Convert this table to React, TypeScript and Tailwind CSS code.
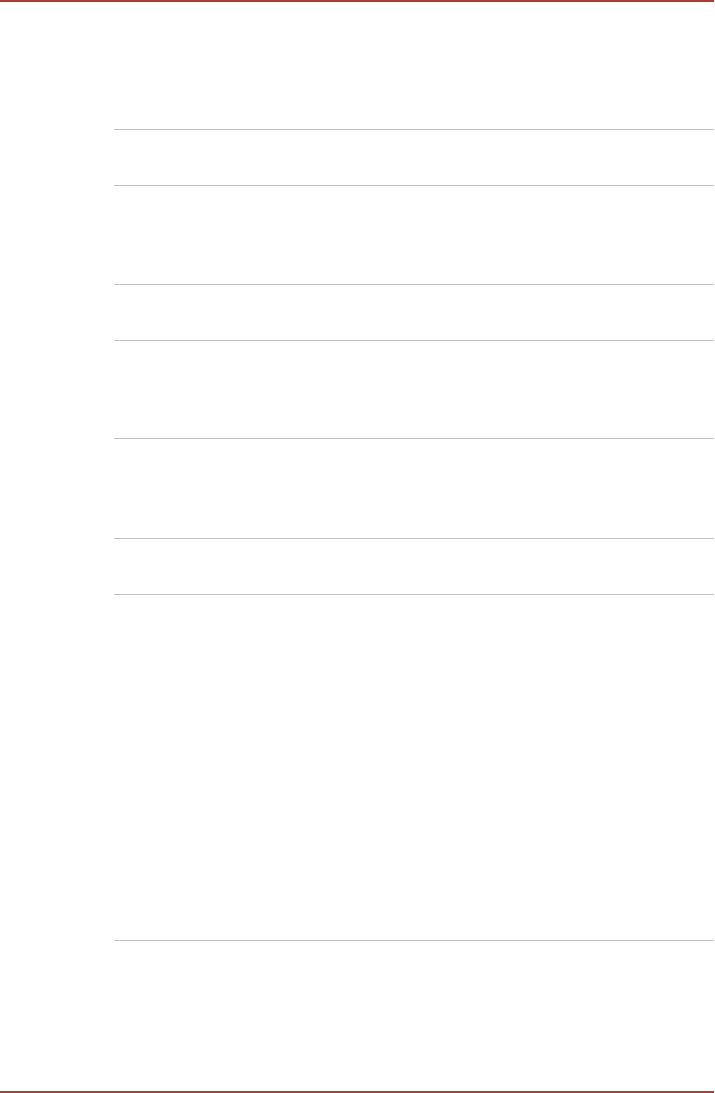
const rows = [
  "h-[56px]",
  "h-[99px]",
  "h-[56px]",
  "h-[98px]",
  "h-[100px]",
  "h-[56px]",
  "h-[346px]",
];

export default function App() {
  return (
    <div className="flex h-[1093px] w-[715px] flex-col bg-white">
      <div className="mr-[1px] h-[2px] bg-[#a83d3b]" />
      <div className="flex flex-1 flex-col pl-[114px] pr-[1px] pt-[127px]">
        {rows.map((h, i) => (
          <div key={i} className={`${h} border-t border-[#c3c3c3]`} />
        ))}
        <div className="flex-1 border-t border-[#c3c3c3]" />
      </div>
      <div className="mr-[1px] h-[2px] bg-[#a83d3b]" />
    </div>
  );
}
